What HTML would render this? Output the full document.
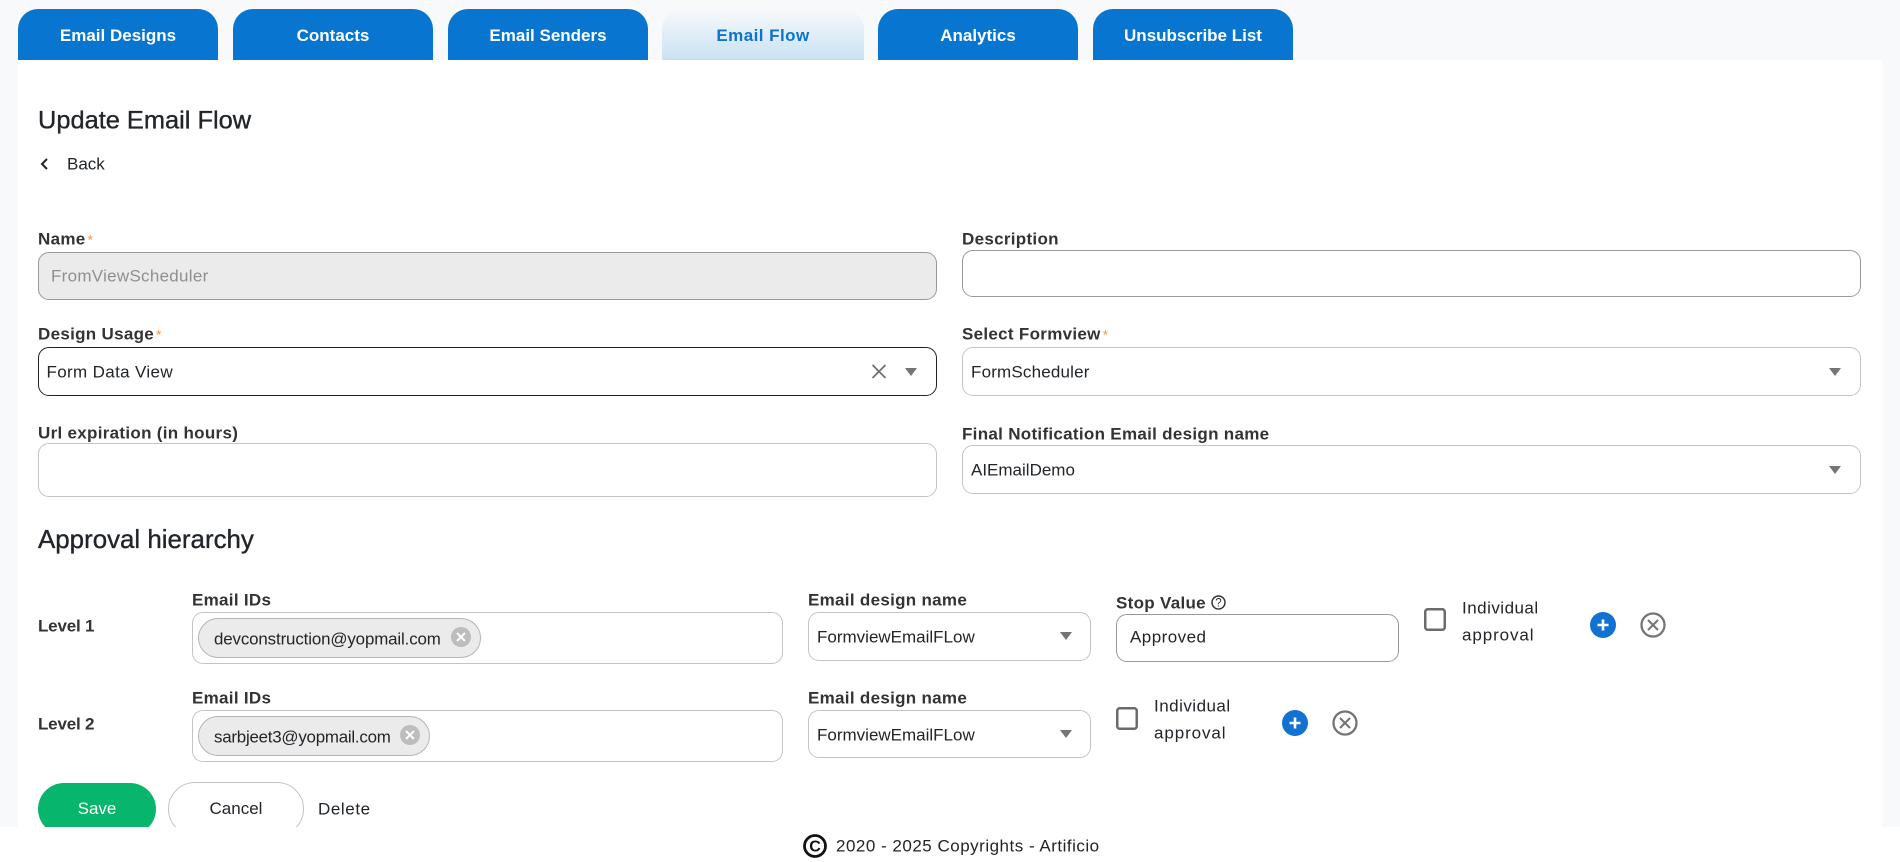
<!DOCTYPE html>
<html lang="en"><head><meta charset="utf-8"><title>Update Email Flow</title>
<style>
html,body{margin:0;padding:0;width:1900px;height:862px;overflow:hidden;background:#fff;font-family:"Liberation Sans",sans-serif;color:#212529}
#top{position:absolute;left:0;top:0;width:1900px;height:827px;background:#f8f9fb}
#main{position:absolute;left:18px;top:60px;width:1864px;height:767px;background:#fff;overflow:hidden}
.a{position:absolute;box-sizing:border-box}
.tab{position:absolute;top:9px;height:51px;width:200px;background:#0876d1;border-radius:20px 20px 0 0;color:#fff;font-weight:bold;font-size:17px;text-align:center;line-height:53px}
.tab.on{background:linear-gradient(#f8f9fb,#c9e2f3);color:#0a74cf;letter-spacing:.45px}
.t{position:absolute;white-space:nowrap;line-height:1;transform:translateY(-50%);font-size:17px}
.l{font-weight:bold;color:#333;font-size:17px;letter-spacing:.3px}
.lv{letter-spacing:-.2px}
.b{position:absolute;box-sizing:border-box;background:#fff;border:1.5px solid #c4c4c4;border-radius:11px}
.d{border-color:#999}
.chip{position:absolute;box-sizing:border-box;height:40px;background:#ebebeb;border:1.5px solid #b5b5b5;border-radius:20px}
svg{position:absolute;overflow:visible}
.h{-webkit-text-stroke:.35px #212529}
.r{color:#f0954a;font-size:14px;font-weight:normal;letter-spacing:0;margin-left:2px}
</style></head><body>
<div id="top"></div>
<div id="main">
<button class="a" style="left:20px;top:723px;width:118px;height:52px;background:#08b56d;border:0;border-radius:26px;color:#fff;font:17px 'Liberation Sans',sans-serif">Save</button>
<button class="a" style="left:150px;top:722px;width:136px;height:54px;background:#fff;border:1.5px solid #c4c4c4;border-radius:27px;color:#212529;font:17px 'Liberation Sans',sans-serif">Cancel</button>
</div>

<div class="tab" style="left:18px">Email Designs</div>
<div class="tab" style="left:233px">Contacts</div>
<div class="tab" style="left:448px">Email Senders</div>
<div class="tab on" style="left:662px;width:202px">Email Flow</div>
<div class="tab" style="left:878px">Analytics</div>
<div class="tab" style="left:1093px">Unsubscribe List</div>

<div class="t h" style="left:38px;top:121px;font-size:25.4px">Update Email Flow</div>
<svg style="left:39px;top:157px" width="12" height="14" viewBox="0 0 12 14"><path d="M8 2L3 7l5 5" fill="none" stroke="#212529" stroke-width="2"/></svg>
<div class="t" style="left:67px;top:164px">Back</div>

<div class="t l" style="left:38px;top:239px">Name<span class="r">*</span></div>
<div class="b d" style="left:38px;top:252px;width:899px;height:48px;background:#ebebeb"></div>
<div class="t" style="left:51px;top:276px;color:#8f8f8f;letter-spacing:.28px">FromViewScheduler</div>

<div class="t l" style="left:962px;top:239px">Description</div>
<div class="b d" style="left:962px;top:250px;width:899px;height:47px"></div>

<div class="t l" style="left:38px;top:334px">Design Usage<span class="r">*</span></div>
<div class="b" style="left:38px;top:347px;width:899px;height:49px;border-color:#222"></div>
<div class="t" style="left:46.500px;top:372px;letter-spacing:.35px">Form Data View</div>
<svg style="left:871px;top:364px" width="16" height="15" viewBox="0 0 16 15"><path d="M1.500 1l13 13M14.500 1l-13 13" stroke="#6f6f6f" stroke-width="1.700" fill="none"/></svg>
<svg style="left:905px;top:368px" width="12" height="8"><path d="M0 0h12L6 8z" fill="#757575"/></svg>

<div class="t l" style="left:962px;top:334px">Select Formview<span class="r">*</span></div>
<div class="b" style="left:962px;top:347px;width:899px;height:49px"></div>
<div class="t" style="left:971px;top:372px;letter-spacing:.18px">FormScheduler</div>
<svg style="left:1829px;top:368px" width="12" height="8"><path d="M0 0h12L6 8z" fill="#757575"/></svg>

<div class="t l" style="left:38px;top:433px">Url expiration (in hours)</div>
<div class="b" style="left:38px;top:443px;width:899px;height:54px"></div>

<div class="t l" style="left:962px;top:434px">Final Notification Email design name</div>
<div class="b" style="left:962px;top:445px;width:899px;height:49px"></div>
<div class="t" style="left:971px;top:470px">AIEmailDemo</div>
<svg style="left:1829px;top:466px" width="12" height="8"><path d="M0 0h12L6 8z" fill="#757575"/></svg>

<div class="t h" style="left:38px;top:541px;font-size:25.900px">Approval hierarchy</div>

<div class="t l lv" style="left:38px;top:626px">Level 1</div>
<div class="t l" style="left:192px;top:600px">Email IDs</div>
<div class="b" style="left:192px;top:612px;width:591px;height:52px"></div>
<div class="chip" style="left:198px;top:618px;width:283px"></div>
<div class="t" style="left:214px;top:640px;font-size:16.900px;letter-spacing:-.13px">devconstruction@yopmail.com</div>
<svg style="left:451px;top:627px" width="20" height="20" viewBox="0 0 20 20"><circle cx="10" cy="10" r="10" fill="#bdbdbd"/><path d="M6 6l8 8M14 6l-8 8" stroke="#fff" stroke-width="2"/></svg>

<div class="t l" style="left:808px;top:600px">Email design name</div>
<div class="b" style="left:808px;top:612px;width:283px;height:49px"></div>
<div class="t" style="left:817px;top:637px">FormviewEmailFLow</div>
<svg style="left:1060px;top:632px" width="12" height="8"><path d="M0 0h12L6 8z" fill="#757575"/></svg>

<div class="t l" style="left:1116px;top:603px">Stop Value</div>
<svg style="left:1211px;top:594.500px" width="15" height="15" viewBox="0 0 15 15"><circle cx="7.500" cy="7.500" r="6.500" fill="none" stroke="#333" stroke-width="1.500"/><text x="7.500" y="11.600" text-anchor="middle" font-size="11.500" font-family="Liberation Sans" fill="#333">?</text></svg>
<div class="b d" style="left:1116px;top:614px;width:283px;height:48px"></div>
<div class="t" style="left:1130px;top:637px;letter-spacing:.45px">Approved</div>

<svg style="left:1424px;top:608px" width="22" height="23" viewBox="0 0 22 23"><rect x="1.250" y="1.250" width="19.500" height="20.500" rx="2.500" fill="none" stroke="#6b6b6b" stroke-width="2.500"/></svg>
<div class="t" style="left:1462px;top:608px;letter-spacing:.48px">Individual</div>
<div class="t" style="left:1462px;top:635px;letter-spacing:.9px">approval</div>
<svg style="left:1590px;top:612px" width="26" height="26" viewBox="0 0 26 26"><circle cx="13" cy="13" r="13" fill="#1272d3"/><path d="M13 7.500v11M7.500 13h11" stroke="#fff" stroke-width="2.600"/></svg>
<svg style="left:1640px;top:612px" width="26" height="26" viewBox="0 0 26 26"><circle cx="13" cy="13" r="11.500" fill="none" stroke="#757575" stroke-width="2.300"/><path d="M8 8l10 10M18 8L8 18" stroke="#757575" stroke-width="2.100"/></svg>

<div class="t l lv" style="left:38px;top:724px">Level 2</div>
<div class="t l" style="left:192px;top:698px">Email IDs</div>
<div class="b" style="left:192px;top:710px;width:591px;height:52px"></div>
<div class="chip" style="left:198px;top:716px;width:232px"></div>
<div class="t" style="left:214px;top:738px;font-size:16.900px;letter-spacing:-.23px">sarbjeet3@yopmail.com</div>
<svg style="left:400px;top:725px" width="20" height="20" viewBox="0 0 20 20"><circle cx="10" cy="10" r="10" fill="#bdbdbd"/><path d="M6 6l8 8M14 6l-8 8" stroke="#fff" stroke-width="2"/></svg>

<div class="t l" style="left:808px;top:698px">Email design name</div>
<div class="b" style="left:808px;top:710px;width:283px;height:48px"></div>
<div class="t" style="left:817px;top:735px">FormviewEmailFLow</div>
<svg style="left:1060px;top:730px" width="12" height="8"><path d="M0 0h12L6 8z" fill="#757575"/></svg>

<svg style="left:1116px;top:707px" width="22" height="23" viewBox="0 0 22 23"><rect x="1.250" y="1.250" width="19.500" height="20.500" rx="2.500" fill="none" stroke="#6b6b6b" stroke-width="2.500"/></svg>
<div class="t" style="left:1154px;top:706px;letter-spacing:.48px">Individual</div>
<div class="t" style="left:1154px;top:733px;letter-spacing:.9px">approval</div>
<svg style="left:1282px;top:710px" width="26" height="26" viewBox="0 0 26 26"><circle cx="13" cy="13" r="13" fill="#1272d3"/><path d="M13 7.500v11M7.500 13h11" stroke="#fff" stroke-width="2.600"/></svg>
<svg style="left:1332px;top:710px" width="26" height="26" viewBox="0 0 26 26"><circle cx="13" cy="13" r="11.500" fill="none" stroke="#757575" stroke-width="2.300"/><path d="M8 8l10 10M18 8L8 18" stroke="#757575" stroke-width="2.100"/></svg>

<div class="t" style="left:318px;top:809px;letter-spacing:.6px">Delete</div>

<svg style="left:803px;top:834px" width="24" height="24" viewBox="0 0 24 24"><circle cx="12" cy="12" r="10.500" fill="none" stroke="#111" stroke-width="2.800"/><text x="12" y="17.500" text-anchor="middle" font-size="16" font-weight="bold" font-family="Liberation Sans" fill="#111">C</text></svg>
<div class="t" style="left:836px;top:846px;letter-spacing:.5px">2020 - 2025 Copyrights - Artificio</div>
</body></html>
